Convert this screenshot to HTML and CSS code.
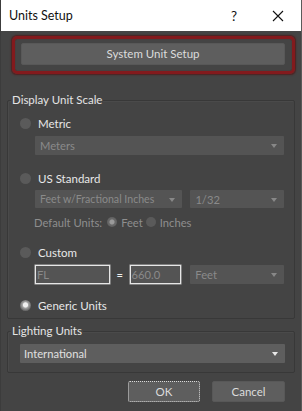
FILE: index.html
```html
<!DOCTYPE html>
<html>
<head>
<meta charset="utf-8">
<link rel="stylesheet" href="styles.css">
</head>
<body>
<div class="window">
  <div class="titlebar">
    <span class="title">Units Setup</span>
    <span class="help">?</span>
    <span class="close"><svg width="12" height="12" viewBox="0 0 12 12"><path d="M1 1L11 11M11 1L1 11" stroke="#111" stroke-width="1.1" fill="none"/></svg></span>
  </div>
  <div class="body">
    <div class="highlight">
      <div class="btn sys">System Unit Setup</div>
    </div>

    <div class="group g1">
      <span class="legend">Display Unit Scale</span>
      <div class="radio-row"><span class="radio"></span><span class="lbl">Metric</span></div>
      <div class="indent mt6">
        <div class="dd dis full"><span>Meters</span><i class="arrow"></i></div>
      </div>
      <div class="radio-row mt16"><span class="radio"></span><span class="lbl">US Standard</span></div>
      <div class="indent mt5 split">
        <div class="dd dis w-feet"><span>Feet w/Fractional Inches</span><i class="arrow"></i></div>
        <div class="dd dis w-frac"><span>1/32</span><i class="arrow"></i></div>
      </div>
      <div class="defunits">
        <span class="dlbl">Default Units:</span>
        <span class="radio small sel-dis"></span><span class="dlbl feet">Feet</span>
        <span class="radio small"></span><span class="dlbl">Inches</span>
      </div>
      <div class="radio-row mt16"><span class="radio"></span><span class="lbl">Custom</span></div>
      <div class="indent mt6 custom">
        <div class="inp w-fl">FL</div>
        <span class="eq">=</span>
        <div class="inp w-num">660.0</div>
        <div class="dd dis w-frac"><span>Feet</span><i class="arrow"></i></div>
      </div>
      <div class="radio-row mt14"><span class="radio sel"></span><span class="lbl">Generic Units</span></div>
    </div>

    <div class="group g2">
      <span class="legend">Lighting Units</span>
      <div class="dd en full2"><span>International</span><i class="arrow light"></i></div>
    </div>

    <div class="buttons">
      <div class="btn ok">OK</div>
      <div class="btn cancel">Cancel</div>
    </div>
  </div>
</div>
</body>
</html>
```
FILE: styles.css
```css
* { box-sizing: border-box; }
html, body { margin: 0; padding: 0; }
body {
  width: 302px;
  height: 411px;
  background: #444444;
  font-family: Lato, "Noto Sans", sans-serif;
  font-size: 11.2px;
  color: #e2e2e2;
  overflow: hidden;
}
.window {
  width: 302px;
  height: 411px;
  border-right: 1px solid #5a5a5a;
  border-left: 1px solid #3c3c3c;
  display: flex;
  flex-direction: column;
}
.titlebar {
  height: 31px;
  background: #ffffff;
  display: flex;
  align-items: center;
  color: #111;
  font-size: 12.5px;
  padding-left: 8px;
  position: relative;
}
.title { flex: 1; margin-top: -1px; }
.help { width: 16px; margin-right: 30px; text-align: center; font-size: 13.5px; }
.close { width: 12px; height: 12px; margin-right: 17px; display: flex; }

.body { display: flex; flex-direction: column; flex: 1; }

.highlight {
  margin: 5px 6px 0 11px;
  height: 38px;
  border: 3px solid #831a1d;
  border-radius: 5px;
  padding: 4px 7px 0 6px;
  box-shadow: 0 0 1.5px 0.5px #4e2020, inset 0 0 1px #5a1a1a;
}
.btn {
  background: #5e5e5e;
  border-radius: 2px;
  height: 22px;
  display: flex;
  align-items: center;
  justify-content: center;
  color: #dcdcdc;
  border: 1px solid #585858;
  font-size: 11.5px;
}
.sys { padding-bottom: 1px; }

.group {
  position: relative;
  border: 1px solid #383838;
  border-radius: 2px;
  margin-left: 6px;
  margin-right: 6px;
  box-shadow: 1px 1px 0 #4a4a4a inset;
}
.legend {
  position: absolute;
  left: 3px;
  top: -9px;
  background: #444;
  padding: 0 1px;
  color: #e4e4e4;
  line-height: 16px;
  font-size: 11.5px;
}
.g1 { margin-top: 26px; height: 219px; padding: 15px 10px 0 12px; }
.g2 { margin-top: 12px; height: 42px; padding: 12px 10px 0 12px; }

.radio-row { display: flex; align-items: center; height: 14px; }
.radio {
  width: 11px; height: 11px; border-radius: 50%;
  background: #5a5a5a;
  flex: none;
  display: inline-block;
}
.radio.sel {
  background: radial-gradient(circle at 50% 45%, #f0f0f0 0 2.2px, #a8a8a8 3px, #6c6c6c 5.5px);
}
.radio.small { width: 10px; height: 10px; }
.radio.sel-dis {
  background: radial-gradient(circle at 50% 50%, #9a9a9a 0 2px, #6a6a6a 3px, #606060 5px);
}
.lbl { margin-left: 7px; color: #e8e8e8; font-size: 11.5px; }

.mt5 { margin-top: 5px; }
.mt6 { margin-top: 6px; }
.mt14 { margin-top: 14px; }
.mt16 { margin-top: 16px; }

.indent { margin-left: 15px; display: flex; }
.split { gap: 8px; }

.dd {
  height: 19px;
  background: #545454;
  border-radius: 1px;
  display: flex;
  align-items: center;
  padding-left: 5px;
  padding-right: 7px;
  color: #8a8a8a;
}
.dd span { flex: 1; white-space: nowrap; overflow: hidden; }
.dd.full { width: 250px; }
.w-feet { width: 148px; height: 18px; }
.w-feet span { font-size: 10.6px; }
.split .w-frac { height: 18px; }
.w-frac { width: 94px; }
.dd.en { background: #5e5e5e; color: #e0e0e0; padding-left: 4px; }
.full2 { width: 265px; }
.arrow {
  width: 0; height: 0;
  border-left: 3px solid transparent;
  border-right: 3px solid transparent;
  border-top: 4px solid #888;
  margin-top: 1px;
  margin-left: 4px;
}
.arrow.light { border-top-color: #e8e8e8; }

.defunits {
  display: flex; align-items: center; height: 14px;
  margin-top: 7px; margin-left: 14px;
  color: #8e8e8e;
}
.defunits .radio { margin-left: 3px; }
.dlbl { margin-left: 4px; }
.defunits .dlbl:first-child { margin-left: 0; margin-right: 2px; }
.feet { margin-right: 0; }

.custom { align-items: center; }
.inp {
  height: 19px;
  border: 1px solid #e6e6e6;
  box-shadow: 0 0 0 0.5px #bbb;
  background: #545454;
  color: #8a8a8a;
  padding-left: 1px;
  display: flex; align-items: center;
  line-height: 1;
}
.w-fl { width: 75px; }
.w-num { width: 52px; }
.eq { width: 20px; text-align: center; color: #f0f0f0; }
.custom .w-frac { margin-left: 9px; }

.buttons {
  display: flex;
  justify-content: flex-end;
  gap: 12px;
  margin-top: 8px;
  padding-right: 16px;
}
.buttons .btn { height: 21px; }
.ok {
  width: 72px;
  border: 1px dotted #d8d8d8;
}
.cancel { width: 73px; }
```
